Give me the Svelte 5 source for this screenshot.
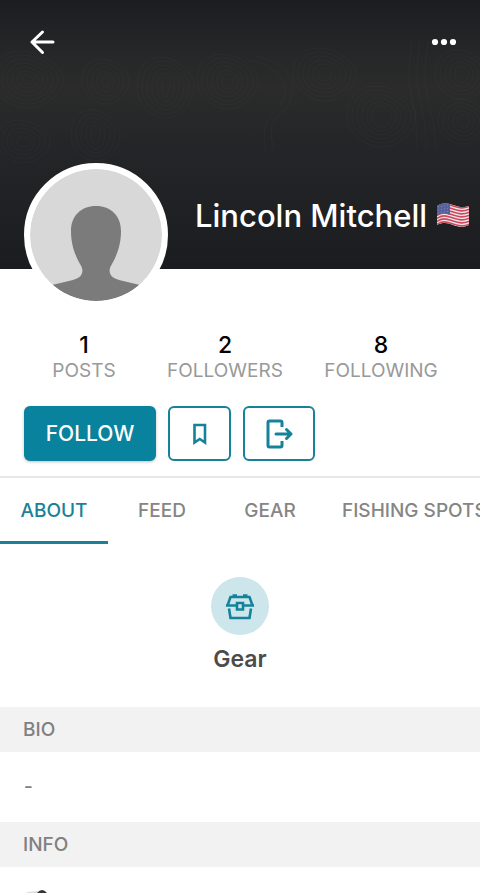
<script lang="ts">
  const stats = [
    { value: 1, label: 'POSTS' },
    { value: 2, label: 'FOLLOWERS' },
    { value: 8, label: 'FOLLOWING' },
  ];
  const tabs = ['ABOUT', 'FEED', 'GEAR', 'FISHING SPOTS'];
  let active = $state('ABOUT');

  // hills of the contour map behind the header
  const hills = [
    { x: 28, y: 80, rx: 6, ry: 4, rings: 7 },
    { x: 106, y: 82, rx: 4, ry: 6, rings: 5 },
    { x: 166, y: 88, rx: 4, ry: 10, rings: 6 },
    { x: 228, y: 82, rx: 6, ry: 7, rings: 6 },
    { x: 325, y: 75, rx: 7, ry: 6, rings: 6 },
    { x: 382, y: 117, rx: 10, ry: 10, rings: 6 },
    { x: 462, y: 75, rx: 7, ry: 8, rings: 5 },
    { x: 464, y: 122, rx: 6, ry: 6, rings: 5 },
    { x: 24, y: 142, rx: 7, ry: 5, rings: 5 },
    { x: 96, y: 136, rx: 5, ry: 9, rings: 5 },
  ];

  function contour(h: { x: number; y: number; rx: number; ry: number }, i: number) {
    const rx = h.rx + i * 5;
    const ry = h.ry + i * 4;
    const { x, y } = h;
    return `M${x - rx} ${y}C${x - rx} ${y - ry} ${x - rx / 3} ${y - ry - 3} ${x + 2} ${y - ry}S${x + rx} ${y - ry / 2} ${x + rx - 1} ${y}S${x + rx / 2} ${y + ry} ${x} ${y + ry}S${x - rx} ${y + ry / 2} ${x - rx} ${y}Z`;
  }
</script>

<main>
  <header class="cover">
    <svg class="contours" viewBox="0 0 480 269" preserveAspectRatio="xMidYMid slice" aria-hidden="true">
      {#each hills as hill}
        {#each Array(hill.rings) as _, i}
          <path d={contour(hill, i)} />
        {/each}
      {/each}
      <path d="M250 60q30 8 34 24t-10 28-8 40M256 56q34 8 36 28t-12 30-6 36M412 40q-6 40 0 60t4 50M420 40q-6 40 0 60t6 50M428 40q-6 40 0 60t8 50" />
    </svg>
    <div class="bar">
      <button class="icon" aria-label="Back">
        <svg width="36" height="36" viewBox="0 0 36 36" fill="none" stroke="#fff" stroke-width="3" stroke-linecap="round" stroke-linejoin="round">
          <path d="M29 18H8M18.500 8 8 18l10.500 10.500" />
        </svg>
      </button>
      <button class="icon" aria-label="More">
        <svg width="36" height="36" viewBox="0 0 36 36" fill="#fff">
          <circle cx="9" cy="18" r="3.100" /><circle cx="18" cy="18" r="3.100" /><circle cx="27" cy="18" r="3.100" />
        </svg>
      </button>
    </div>
    <div class="identity">
      <svg class="avatar" viewBox="0 0 132 132" role="img" aria-label="Profile picture">
        <clipPath id="face"><circle cx="66" cy="66" r="66" /></clipPath>
        <g clip-path="url(#face)">
          <path fill="#d8d8d8" d="M0 0h132v132H0z" />
          <path fill="#7a7b7a" d="M66 37c-15 0-25 10-25 25 0 14 4 24 9 33 2 3 3 6 2 9-1 4-4 5-9 7l-21 5v20h88v-20l-21-5c-5-2-8-3-9-7-1-3 0-6 2-9 5-9 9-19 9-33 0-15-10-25-25-25z" />
        </g>
      </svg>
      <h1>Lincoln Mitchell</h1>
      <svg class="flag" viewBox="0 0 34 26" role="img" aria-label="United States">
        <clipPath id="cloth"><path d="M1 3C7-1 11 0 17 2s10 3 16 1v19c-6 3-11 2-16 0S7 19 1 22z" /></clipPath>
        <g clip-path="url(#cloth)">
          <path fill="#f2e9ed" d="M0 0h34v26H0z" />
          <g fill="none" stroke="#c94b5d" stroke-width="1.600">
            {#each [0, 3, 6, 9, 12, 15, 18] as y}
              <path d="M0 {y + 4}C7 {y - 1} 11 {y + 1} 17 {y + 3}s10 3 17 0" />
            {/each}
          </g>
          <path fill="#53609b" d="M0 0h14v12C9 10 5 10 0 13z" />
          <path stroke="#8089bb" stroke-width="1" stroke-dasharray="1 2" d="M2 4 14 2M2 7l12-2M2 10l12-2" />
        </g>
      </svg>
    </div>
  </header>

  <dl class="stats">
    {#each stats as stat}
      <div>
        <dt>{stat.label}</dt>
        <dd>{stat.value}</dd>
      </div>
    {/each}
  </dl>

  <div class="actions">
    <button class="follow">FOLLOW</button>
    <button class="save" aria-label="Save">
      <svg width="24" height="24" viewBox="0 0 24 24" fill="none" stroke="currentColor" stroke-width="2.600">
        <path d="M6.500 3h10.500v17.500L11.800 17 6.500 20.500z" />
      </svg>
    </button>
    <button class="share" aria-label="Share">
      <svg width="36" height="36" viewBox="0 0 36 36" fill="none" stroke="currentColor" stroke-width="3" stroke-linecap="round" stroke-linejoin="round">
        <path stroke-linecap="butt" d="M21 11V6.500Q21 5 19.500 5h-11Q7 5 7 6.500v23Q7 31 8.500 31h11q1.500 0 1.500-1.500V25" />
        <path d="M15 18h15M25.500 13.500l4.500 4.500-4.500 4.500" />
      </svg>
    </button>
  </div>

  <nav>
    {#each tabs as tab}
      <button class:active={active === tab} onclick={() => (active = tab)}>{tab}</button>
    {/each}
  </nav>

  <a class="gear" href="#gear">
    <span class="disc">
      <svg width="30" height="28" viewBox="0 0 30 28" fill="none" stroke="currentColor" stroke-width="2.600">
        <path d="M11.500 13.500H2.500L5.500 5h19l3 8.500h-9M1 13.500h2M27 13.500h2" />
        <path d="M4 16.500 5.500 26h19L26 16.500" />
        <path d="M12 11h6v6.500h-6z" />
        <path d="M7.500 3.500h4.500M18 3.500h4.500" />
      </svg>
    </span>
    Gear
  </a>

  <section>
    <h2>BIO</h2>
    <p>-</p>
  </section>
  <section>
    <h2>INFO</h2>
    <div class="peek">
      <svg width="36" height="36" viewBox="0 0 36 36" aria-hidden="true">
        <path fill="#ddd" d="M3 6l11-1v26H3z" />
        <path fill="#333" d="M13 7q5-6 10 0v24H13z" />
      </svg>
    </div>
  </section>
</main>

<style>
  :global(body) { margin: 0; background: #fff; }
  main { height: 100vh; overflow: hidden; font-family: Inter, 'Open Sans', sans-serif; font-weight: 500; color: #808080; }
  button { font: inherit; margin: 0; padding: 0; border: 0; background: none; cursor: pointer; }
  svg { display: block; flex: none; }

  .cover { position: relative; height: 269px; background: linear-gradient(#1c1d21, #262829 22%, #2a2b2a 32%, #252628 52%, #1b1c1f); }
  .contours { position: absolute; inset: 0; width: 100%; height: 100%; fill: none; stroke: #fff; stroke-opacity: 0.025; stroke-width: 1; }
  .bar { position: relative; display: flex; justify-content: space-between; padding: 24px 18px 0 24px; }
  .identity { position: relative; display: flex; align-items: center; margin-top: 103px; padding-left: 24px; }
  .avatar { width: 132px; height: 132px; border: 6px solid #fff; border-radius: 50%; background: #fff; }
  h1 { margin: 0 9px 38px 27px; font-size: 31px; line-height: 32px; font-weight: 500; color: #fff; white-space: nowrap; }
  .flag { width: 34px; height: 26px; margin-bottom: 38px; }

  .stats { display: grid; grid-template-columns: 120fr 162fr 150fr; margin: 0; padding: 62px 24px 0; text-align: center; }
  .stats div { display: flex; flex-direction: column-reverse; }
  dt { font-size: 19px; line-height: 24px; font-weight: 400; color: #999; }
  dd { margin: 0; font-size: 23px; line-height: 28px; color: #000; }

  .actions { display: flex; gap: 12px; padding: 23px 24px 15px; border-bottom: 2px solid #e8e8e8; }
  .actions button { display: flex; align-items: center; justify-content: center; box-sizing: border-box; height: 55px; border: 2px solid #16829a; border-radius: 6px; color: #16829a; }
  .actions .follow { width: 132px; background: #08829d; border-color: #08829d; color: #fff; font-size: 21px; box-shadow: 0 1px 3px rgba(0, 0, 0, 0.25); }
  .save { width: 63px; }
  .share { width: 72px; }

  nav { display: flex; overflow: hidden; }
  nav button { flex: none; min-width: 108px; padding: 2px 18px 0; height: 66px; font-size: 19px; color: #858585; border-bottom: 3px solid transparent; white-space: nowrap; }
  nav .active { color: #1b8198; border-color: #1b8198; }

  .gear { display: flex; flex-direction: column; align-items: center; gap: 8px; padding: 33px 0 32px; font-size: 23px; line-height: 32px; font-weight: 600; color: #4c4c4c; text-decoration: none; }
  .disc { display: grid; place-items: center; width: 58px; height: 58px; border-radius: 50%; background: #cde6eb; color: #16829a; }

  h2 { margin: 0; padding: 0 23px; font-size: 19px; line-height: 45px; font-weight: 500; background: #f2f2f2; }
  p { margin: 0; padding: 23px 24px; font-size: 19px; line-height: 24px; }
  .peek { padding: 19px 24px; }
</style>
